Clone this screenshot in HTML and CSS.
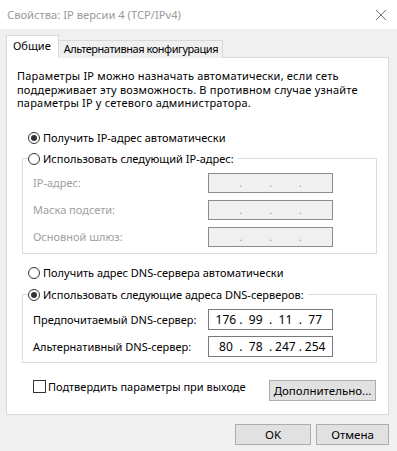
FILE: index.html
```html
<!DOCTYPE html>
<html lang="ru">
<head>
<meta charset="utf-8">
<title>Свойства: IP версии 4 (TCP/IPv4)</title>
<link rel="stylesheet" href="styles.css">
</head>
<body>
<div class="window">
  <div class="titlebar">
    <span class="title">Свойства: IP версии 4 (TCP/IPv4)</span>
    <svg class="close" width="12" height="12" viewBox="0 0 12 12"><path d="M1 1L11 11M11 1L1 11" stroke="#6f6f6f" stroke-width="1" fill="none"/></svg>
  </div>
  <div class="content">
    <div class="tabs">
      <div class="tab active">Общие</div>
      <div class="tab">Альтернативная конфигурация</div>
    </div>
    <div class="panel">
      <p class="intro">Параметры IP можно назначать автоматически, если сеть поддерживает эту возможность. В противном случае узнайте параметры IP у сетевого администратора.</p>
      <div class="option first"><span class="radio checked"></span><span>Получить IP-адрес автоматически</span></div>
      <fieldset class="group g1">
        <legend class="option"><span class="radio"></span><span>Использовать следующий IP-адрес:</span></legend>
        <div class="field disabled"><span class="label">IP-адрес:</span><span class="ip small"><span class="oct"></span><span class="dot">.</span><span class="oct"></span><span class="dot">.</span><span class="oct"></span><span class="dot">.</span><span class="oct"></span></span></div>
        <div class="field disabled"><span class="label">Маска подсети:</span><span class="ip small"><span class="oct"></span><span class="dot">.</span><span class="oct"></span><span class="dot">.</span><span class="oct"></span><span class="dot">.</span><span class="oct"></span></span></div>
        <div class="field disabled"><span class="label">Основной шлюз:</span><span class="ip small"><span class="oct"></span><span class="dot">.</span><span class="oct"></span><span class="dot">.</span><span class="oct"></span><span class="dot">.</span><span class="oct"></span></span></div>
      </fieldset>
      <div class="option dns-auto"><span class="radio"></span><span>Получить адрес DNS-сервера автоматически</span></div>
      <fieldset class="group g2">
        <legend class="option"><span class="radio checked"></span><span>Использовать следующие адреса DNS-серверов:</span></legend>
        <div class="field"><span class="label">Предпочитаемый DNS-сервер:</span><span class="ip"><span class="oct">176</span><span class="dot">.</span><span class="oct">99</span><span class="dot">.</span><span class="oct">11</span><span class="dot">.</span><span class="oct">77</span></span></div>
        <div class="field"><span class="label">Альтернативный DNS-сервер:</span><span class="ip"><span class="oct">80</span><span class="dot">.</span><span class="oct">78</span><span class="dot">.</span><span class="oct">247</span><span class="dot">.</span><span class="oct">254</span></span></div>
      </fieldset>
      <div class="bottom-row">
        <label class="check"><span class="box"></span><span>Подтвердить параметры при выходе</span></label>
        <button class="btn adv">Дополнительно...</button>
      </div>
    </div>
    <div class="footer">
      <button class="btn ok">OK</button>
      <button class="btn cancel">Отмена</button>
    </div>
  </div>
</div>
</body>
</html>
```

FILE: styles.css
```css
* { box-sizing: border-box; }
html, body { margin: 0; padding: 0; }
body {
  width: 397px;
  height: 451px;
  overflow: hidden;
  background: #f0f0f0;
  font-family: "Noto Sans", "Liberation Sans", sans-serif;
  font-size: 11px;
  color: #000;
}
.titlebar {
  height: 29px;
  background: #fff;
  display: flex;
  align-items: center;
  justify-content: space-between;
  padding: 0 10px 0 7px;
}
.title { color: #9a9a9a; font-size: 11.2px; }
.close { display: block; }
.content { padding: 6px 8px 0 6px; }
.tabs { display: flex; align-items: flex-end; height: 22px; }
.tab {
  height: 18px;
  line-height: 16px;
  padding: 0 4px 0 5px;
  border: 1px solid #d9d9d9;
  border-bottom: none;
  border-left: none;
  background: #f0f0f0;
  margin-bottom: -1px;
  letter-spacing: -0.45px;
}
.tab.active {
  line-height: 20px;
  padding: 0 7px 0 6px;
  border-left: 1px solid #d9d9d9;
  background: #fff;
  position: relative;
  z-index: 1;
  margin-bottom: -1px;
  height: 23px;
  letter-spacing: 0;
}
.panel {
  background: #fff;
  border: 1px solid #d9d9d9;
  height: 358px;
  padding: 0 11px 0 15px;
}
.intro {
  margin: 11px 0 0 -5px;
  line-height: 13.5px;
  width: 360px;
  letter-spacing: 0.2px;
}
.option { display: flex; align-items: center; height: 16px; white-space: nowrap; }
.option.first { margin: 20px 0 0 6px; }
.radio {
  width: 12px; height: 12px;
  border: 1px solid #333;
  border-radius: 50%;
  margin-right: 3px;
  display: flex; align-items: center; justify-content: center;
  flex: none;
}
.radio.checked::after {
  content: "";
  width: 6px; height: 6px;
  border-radius: 50%;
  background: #333;
}
.group {
  border: 1px solid #dcdcdc;
  margin: 5px 0 0 0;
  padding: 6px 10px 6px 10px;
  min-width: 0;
}
.group legend { padding: 0 4px 0 0; margin-left: -5px; }
.field { display: flex; align-items: center; justify-content: space-between; }
.field + .field { margin-top: 6px; }
.g1 .field + .field { margin-top: 7px; }
.field.disabled .label { color: #a0a0a0; }
.ip {
  width: 125px; height: 21px;
  border: 1px solid #7a7a7a;
  background: #fff;
  display: flex; align-items: center;
  padding: 0 5px;
  margin-right: 33px;
  font-size: 12px;
}
.ip.small { height: 20px; background: #f0f0f0; border-color: #8c8c8c; }
.oct { width: 24px; text-align: center; }
.dot { width: 6px; text-align: center; }
.ip.small .dot { color: #909090; font-size: 10px; }
.dns-auto { margin: 11px 0 0 6px; }
.g2 { margin-top: 6px; padding-bottom: 5px; }
.bottom-row {
  display: flex; justify-content: space-between; align-items: flex-start;
  margin-top: 17px; padding-left: 11px;
}
.check { display: flex; align-items: center; height: 13px; margin-top: 0; }
.box { width: 13px; height: 13px; border: 1px solid #333; margin-right: 2px; flex: none; }
.btn {
  font-family: inherit;
  font-size: 11.5px;
  background: #e1e1e1;
  border: 1px solid #adadad;
  height: 21px;
  padding: 0;
  color: #000;
}
.adv { width: 107px; margin-right: 1px; }
.footer { display: flex; justify-content: flex-end; gap: 5px; margin-top: 9px; padding-right: 0; }
.ok { width: 76px; }
.cancel { width: 73px; }
```
